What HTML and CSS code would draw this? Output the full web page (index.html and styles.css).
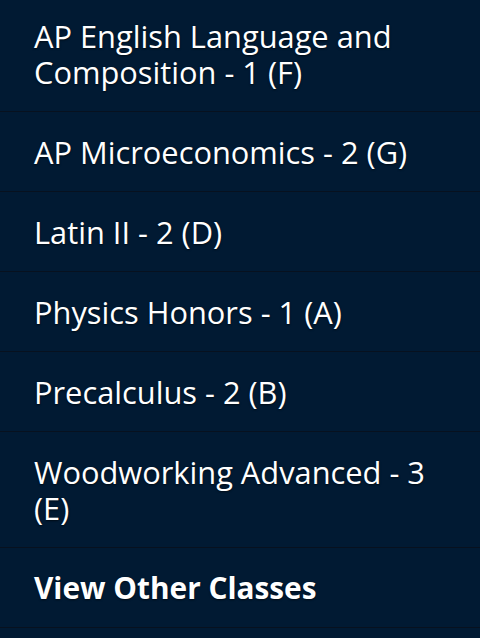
FILE: index.html
```html
<!DOCTYPE html>
<html>
<head>
<meta charset="utf-8">
<link rel="stylesheet" href="styles.css">
</head>
<body>
<ul class="menu">
  <li class="item first">AP English Language and Composition - 1 (F)</li>
  <li class="item">AP Microeconomics - 2 (G)</li>
  <li class="item">Latin II - 2 (D)</li>
  <li class="item">Physics Honors - 1 (A)</li>
  <li class="item">Precalculus - 2 (B)</li>
  <li class="item">Woodworking Advanced - 3 (E)</li>
  <li class="item strong">View Other Classes</li>
</ul>
</body>
</html>
```
FILE: styles.css
```css
html, body {
  margin: 0;
  padding: 0;
  background: #011a33;
  height: 100%;
  overflow: hidden;
}
.menu {
  list-style: none;
  margin: 0;
  padding: 0;
  font-family: "Open Sans", "Noto Sans", sans-serif;
  font-size: 30.8px;
  line-height: 36px;
  color: #ffffff;
}
.item {
  padding: 22px 40px 21px 34px;
  border-bottom: 1px solid #07111f;
  text-shadow: 0 1px 2px rgba(0, 0, 0, 0.6);
}
.first {
  padding-top: 18px;
}
.strong {
  font-weight: 700;
  font-size: 29.8px;
}
```
